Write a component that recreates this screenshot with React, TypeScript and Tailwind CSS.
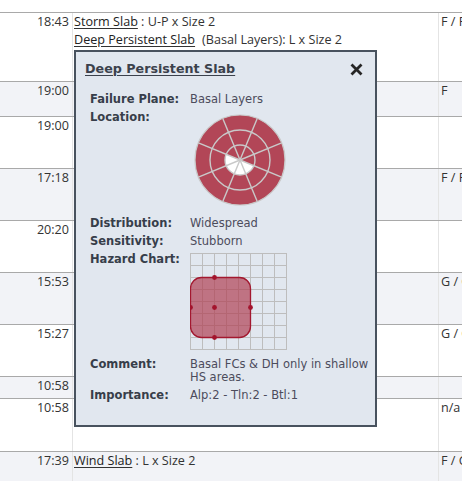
import React from "react";

type Row = {
  time: string;
  right: string;
  h: string;
  bg: string;
  mid?: React.ReactNode;
};

const Link = ({ children }: { children: React.ReactNode }) => (
  <span className="underline decoration-[#333] underline-offset-[2px] text-[#222]">{children}</span>
);

const rows: Row[] = [
  {
    time: "18:43",
    right: "F / F",
    h: "h-[69px]",
    bg: "bg-white",
    mid: (
      <>
        <div>
          <Link>Storm Slab</Link> : U-P x Size 2
        </div>
        <div>
          <Link>Deep Persistent Slab</Link>
          <span className="ml-[7px]">(Basal Layers): L x Size 2</span>
        </div>
      </>
    ),
  },
  { time: "19:00", right: "F", h: "h-[35px]", bg: "bg-[#f2f3f7]" },
  { time: "19:00", right: "", h: "h-[52px]", bg: "bg-white" },
  { time: "17:18", right: "F / F", h: "h-[52px]", bg: "bg-[#f2f3f7]" },
  { time: "20:20", right: "", h: "h-[52px]", bg: "bg-white" },
  { time: "15:53", right: "G / G", h: "h-[52px]", bg: "bg-[#f2f3f7]" },
  { time: "15:27", right: "G / G", h: "h-[52px]", bg: "bg-white" },
  { time: "10:58", right: "", h: "h-[22px]", bg: "bg-[#f2f3f7]" },
  { time: "10:58", right: "n/a", h: "h-[53px]", bg: "bg-white" },
  {
    time: "17:39",
    right: "F / G",
    h: "h-[40px]",
    bg: "bg-[#f2f3f7]",
    mid: (
      <div>
        <Link>Wind Slab</Link> : L x Size 2
      </div>
    ),
  },
];

function pt(theta: number, r: number, c = 50) {
  const a = (theta * Math.PI) / 180;
  return [c + r * Math.sin(a), c - r * Math.cos(a)];
}

const Rose = () => {
  const red = "#b24657";
  const line = "#c9c9c9";
  const [ax, ay] = pt(112.5, 15);
  const [bx, by] = pt(202.5, 15);
  const [cx2, cy2] = pt(292.5, 15);
  const angles = [22.5, 67.5, 112.5, 157.5, 202.5, 247.5, 292.5, 337.5];
  return (
    <svg width="100" height="100" viewBox="0 0 100 100">
      <circle cx="50" cy="50" r="45" fill={red} stroke={line} strokeWidth="1.2" />
      <path
        d={`M50 50 L${ax} ${ay} A15 15 0 0 1 ${bx} ${by} A15 15 0 0 1 ${cx2} ${cy2} Z`}
        fill="#ffffff"
      />
      <circle cx="50" cy="50" r="30" fill="none" stroke={line} strokeWidth="1.4" />
      <circle cx="50" cy="50" r="15" fill="none" stroke={line} strokeWidth="1.4" />
      {angles.map((t) => {
        const [x, y] = pt(t, 45);
        return <line key={t} x1="50" y1="50" x2={x} y2={y} stroke={line} strokeWidth="1.4" />;
      })}
    </svg>
  );
};

const Hazard = () => {
  const ticks = [0, 1, 2, 3, 4, 5, 6, 7, 8];
  return (
    <svg width="97" height="97" viewBox="0 0 97 97">
      {ticks.map((i) => (
        <line key={"v" + i} x1={0.5 + i * 12} y1="0" x2={0.5 + i * 12} y2="97" stroke="#bdbdbd" strokeWidth="1" />
      ))}
      {ticks.map((i) => (
        <line key={"h" + i} x1="0" y1={0.5 + i * 12} x2="97" y2={0.5 + i * 12} stroke="#bdbdbd" strokeWidth="1" />
      ))}
      <rect x="0.5" y="24.5" width="60" height="60" rx="11" fill="#b03c50" fillOpacity="0.68" stroke="#a3182f" strokeWidth="1.3" />
      {[
        [24.5, 24.5],
        [0.5, 54.5],
        [24.5, 54.5],
        [60.5, 54.5],
        [24.5, 84.5],
      ].map(([x, y], i) => (
        <circle key={i} cx={x} cy={y} r="2.4" fill="#a3142d" />
      ))}
    </svg>
  );
};

const Label = ({ children }: { children: React.ReactNode }) => (
  <div className="w-[100px] shrink-0 font-bold text-[#373e4a] pt-[3px] pb-[2px] leading-[13px]">{children}</div>
);

export default function App() {
  return (
    <div
      className="relative w-[462px] h-[481px] overflow-hidden bg-white text-[12.6px] text-[#333]"
      style={{ fontFamily: '"Open Sans", "Liberation Sans", sans-serif' }}
    >
      <div className="h-[12px]" />
      {rows.map((r, i) => (
        <div key={i} className={`flex border-t border-[#a9a9a9] ${r.h} ${r.bg}`}>
          <div className="w-[73px] shrink-0 border-r border-[#e4e4e4] pr-[3px] text-right leading-[18px]">{r.time}</div>
          <div className="w-[366px] shrink-0 border-r border-[#e4e4e4] pl-[1px] leading-[18px] whitespace-nowrap">{r.mid}</div>
          <div className="flex-1 pl-[2px] leading-[18px] whitespace-nowrap">{r.right}</div>
        </div>
      ))}

      <div
        className="absolute left-[74px] top-[50px] w-[303px] border-2 border-[#48525e] bg-[#e1e7ef] pb-[21px]"
        style={{ fontFamily: '"DejaVu Sans", Verdana, sans-serif' }}
      >
        <div className="flex items-center justify-between pl-[9px] pr-[12px] pt-[8px] h-[26px]">
          <span className="text-[12.7px] font-bold text-[#3b414c] underline underline-offset-[2px] leading-[18px]">
            Deep Persistent Slab
          </span>
          <svg width="13" height="13" viewBox="0 0 13 13">
            <path d="M1.5 1.5 L11.5 11.5 M11.5 1.5 L1.5 11.5" stroke="#262626" strokeWidth="2.8" strokeLinecap="butt" />
          </svg>
        </div>
        <div className="pl-[14px] mt-[12px] text-[11.5px] text-[#4c4c5c]">
          <div className="flex">
            <Label>Failure Plane:</Label>
            <div className="pt-[3px] pb-[2px] leading-[13px]">Basal Layers</div>
          </div>
          <div className="flex">
            <Label>Location:</Label>
            <div className="pt-[2px] pb-[4px]">
              <Rose />
            </div>
          </div>
          <div className="flex">
            <Label>Distribution:</Label>
            <div className="pt-[3px] pb-[2px] leading-[13px]">Widespread</div>
          </div>
          <div className="flex">
            <Label>Sensitivity:</Label>
            <div className="pt-[3px] pb-[2px] leading-[13px]">Stubborn</div>
          </div>
          <div className="flex">
            <Label>Hazard Chart:</Label>
            <div className="pt-[3px] pb-[5px]">
              <Hazard />
            </div>
          </div>
          <div className="flex">
            <Label>Comment:</Label>
            <div className="w-[180px] pt-[3px] pb-[2px] leading-[13px]">Basal FCs &amp; DH only in shallow HS areas.</div>
          </div>
          <div className="flex">
            <Label>Importance:</Label>
            <div className="pt-[3px] pb-[2px] leading-[13px]">Alp:2 - Tln:2 - Btl:1</div>
          </div>
        </div>
      </div>
    </div>
  );
}
